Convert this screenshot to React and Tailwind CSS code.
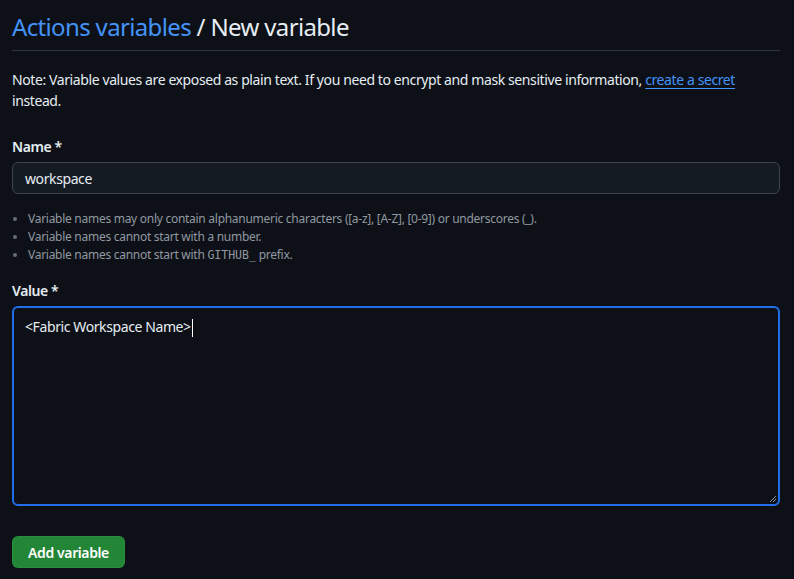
import React from "react";

export default function App() {
  return (
    <div
      className="min-h-[579px] bg-[#0d1117] px-3 text-[#e6edf3] tracking-[-0.025em]"
      style={{ fontFamily: '"Noto Sans", "Open Sans", sans-serif' }}
    >
      {/* heading */}
      <div className="flex items-center h-[51px] border-b border-[#30363d] mr-[2px]">
        <h1 className="text-[24px] font-normal leading-[30px] pt-[3px] tracking-[-0.027em]">
          <span className="text-[#4493f8]">Actions variables</span>
          <span> / New variable</span>
        </h1>
      </div>

      <p className="mt-[18px] text-[14px] leading-[21px]">
        Note: Variable values are exposed as plain text. If you need to encrypt and mask sensitive information,{" "}
        <a className="text-[#4493f8] underline underline-offset-[3px]">create a secret</a>
        <br />
        instead.
      </p>

      <form className="mt-[25px] mr-[2px]">
        <label className="block text-[14px] font-semibold leading-[21px]">Name *</label>
        <div className="mt-[5px] h-[32px] flex items-center rounded-[6px] border border-[#3d444d] bg-[#151b23] px-3 text-[14px]">
          workspace
        </div>
        <ul className="mt-[16px] pl-[16px] list-disc text-[12px] leading-[18px] tracking-[-0.023em] text-[#9198a1] marker:text-[#656c76]">
          <li>Variable names may only contain alphanumeric characters ([a-z], [A-Z], [0-9]) or underscores (_).</li>
          <li>Variable names cannot start with a number.</li>
          <li>
            Variable names cannot start with{" "}
            <code className="text-[11.5px] tracking-normal" style={{ fontFamily: '"DejaVu Sans Mono", monospace' }}>GITHUB_</code> prefix.
          </li>
        </ul>

        <label className="mt-[16px] block text-[14px] font-semibold leading-[21px]">Value *</label>
        <div className="mt-[5px] h-[200px] rounded-[6px] border-2 border-[#1f6feb] bg-[#0d1117] pl-[11px] pt-[8px] text-[14px] leading-[21px] relative">
          <span>&lt;Fabric Workspace Name&gt;</span>
          <span className="inline-block w-px h-[18px] bg-white align-middle ml-px" />
          <svg className="absolute right-[1px] bottom-[1px]" width="8" height="8" viewBox="0 0 8 8">
            <path d="M7 1L1 7M7 4L4 7" stroke="#8b949e" strokeWidth="1" />
          </svg>
        </div>

        <button
          type="button"
          className="mt-[30px] h-[32px] w-[113px] rounded-[6px] border border-[#2ea043]/40 bg-[#238636] text-[14px] font-semibold text-white"
        >
          Add variable
        </button>
      </form>
    </div>
  );
}
